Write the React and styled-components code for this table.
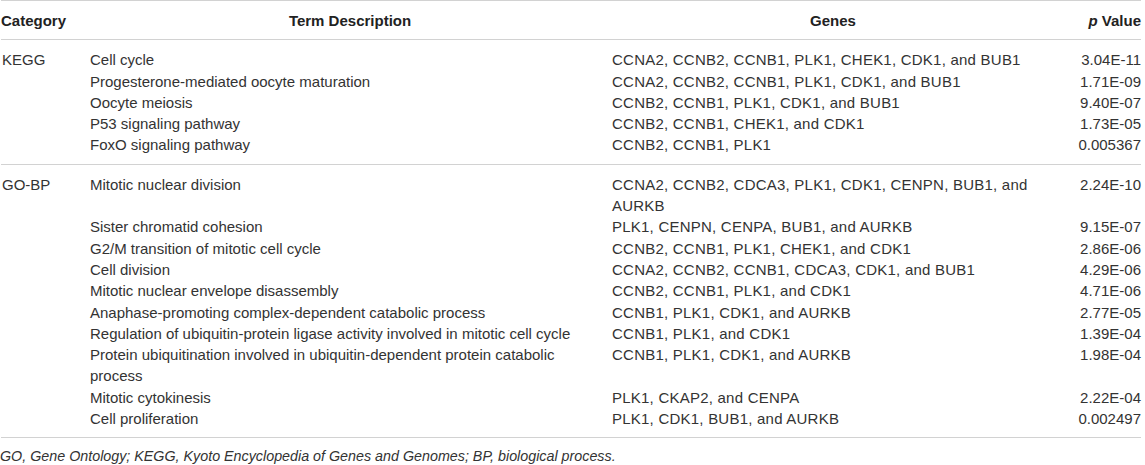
import React from "react";
import styled, { createGlobalStyle } from "styled-components";

const GlobalStyle = createGlobalStyle`
  html, body {
    margin: 0;
    padding: 0;
    background: #ffffff;
  }
  body {
    font-family: "Liberation Sans", Arial, Helvetica, sans-serif;
    color: #333333;
  }
`;

const Wrapper = styled.div`
  width: 1145px;
`;

const Table = styled.table`
  width: 1140px;
  margin-left: 1px;
  border-collapse: collapse;
  border-top: 1px solid #d2d2d2;
  border-bottom: 1px solid #d2d2d2;
  font-size: 15px;
  line-height: 21.3px;
`;

const Head = styled.th`
  font-weight: bold;
  color: #222222;
  padding: 9px 0 8px;
  text-align: ${(p) => p.align || "left"};
  width: ${(p) => p.width || "auto"};
  border-bottom: 1px solid #d2d2d2;
  white-space: nowrap;
`;

const Italic = styled.i`
  font-weight: bold;
`;

const Row = styled.tr`
  border-top: ${(p) => (p.first ? "1px solid #d2d2d2" : "none")};
`;

const Cell = styled.td`
  vertical-align: top;
  padding-top: ${(p) => (p.first ? "9px" : "0")};
  padding-bottom: ${(p) => (p.last ? "8px" : "0")};
  padding-right: ${(p) => p.pr || "0"};
  text-align: ${(p) => p.align || "left"};
  letter-spacing: ${(p) => p.ls || "normal"};
`;

const Footnote = styled.p`
  margin: 9px 0 0 0;
  font-size: 14.3px;
  font-style: italic;
  color: #333333;
  line-height: 18px;
`;

const groups = [
  {
    name: "KEGG",
    rows: [
      ["Cell cycle", "CCNA2, CCNB2, CCNB1, PLK1, CHEK1, CDK1, and BUB1", "3.04E-11"],
      ["Progesterone-mediated oocyte maturation", "CCNA2, CCNB2, CCNB1, PLK1, CDK1, and BUB1", "1.71E-09"],
      ["Oocyte meiosis", "CCNB2, CCNB1, PLK1, CDK1, and BUB1", "9.40E-07"],
      ["P53 signaling pathway", "CCNB2, CCNB1, CHEK1, and CDK1", "1.73E-05"],
      ["FoxO signaling pathway", "CCNB2, CCNB1, PLK1", "0.005367"],
    ],
  },
  {
    name: "GO-BP",
    rows: [
      ["Mitotic nuclear division", "CCNA2, CCNB2, CDCA3, PLK1, CDK1, CENPN, BUB1, and AURKB", "2.24E-10"],
      ["Sister chromatid cohesion", "PLK1, CENPN, CENPA, BUB1, and AURKB", "9.15E-07"],
      ["G2/M transition of mitotic cell cycle", "CCNB2, CCNB1, PLK1, CHEK1, and CDK1", "2.86E-06"],
      ["Cell division", "CCNA2, CCNB2, CCNB1, CDCA3, CDK1, and BUB1", "4.29E-06"],
      ["Mitotic nuclear envelope disassembly", "CCNB2, CCNB1, PLK1, and CDK1", "4.71E-06"],
      ["Anaphase-promoting complex-dependent catabolic process", "CCNB1, PLK1, CDK1, and AURKB", "2.77E-05"],
      ["Regulation of ubiquitin-protein ligase activity involved in mitotic cell cycle", "CCNB1, PLK1, and CDK1", "1.39E-04"],
      ["Protein ubiquitination involved in ubiquitin-dependent protein catabolic process", "CCNB1, PLK1, CDK1, and AURKB", "1.98E-04"],
      ["Mitotic cytokinesis", "PLK1, CKAP2, and CENPA", "2.22E-04"],
      ["Cell proliferation", "PLK1, CDK1, BUB1, and AURKB", "0.002497"],
    ],
  },
];

export default function App() {
  return (
    <Wrapper>
      <GlobalStyle />
      <Table>
        <thead>
          <tr>
            <Head width="88px">Category</Head>
            <Head width="522px" align="center">Term Description</Head>
            <Head width="444px" align="center">Genes</Head>
            <Head align="right">
              <Italic>p</Italic> Value
            </Head>
          </tr>
        </thead>
        <tbody>
          {groups.map((g) =>
            g.rows.map((r, i) => {
              const first = i === 0;
              const last = i === g.rows.length - 1;
              return (
                <Row key={g.name + i} first={first}>
                  <Cell first={first} last={last}>{first ? g.name : ""}</Cell>
                  <Cell first={first} last={last} pr="12px">{r[0]}</Cell>
                  <Cell first={first} last={last} pr="18px" ls="0.23px">{r[1]}</Cell>
                  <Cell first={first} last={last} align="right">{r[2]}</Cell>
                </Row>
              );
            })
          )}
        </tbody>
      </Table>
      <Footnote>
        GO, Gene Ontology; KEGG, Kyoto Encyclopedia of Genes and Genomes; BP, biological process.
      </Footnote>
    </Wrapper>
  );
}
